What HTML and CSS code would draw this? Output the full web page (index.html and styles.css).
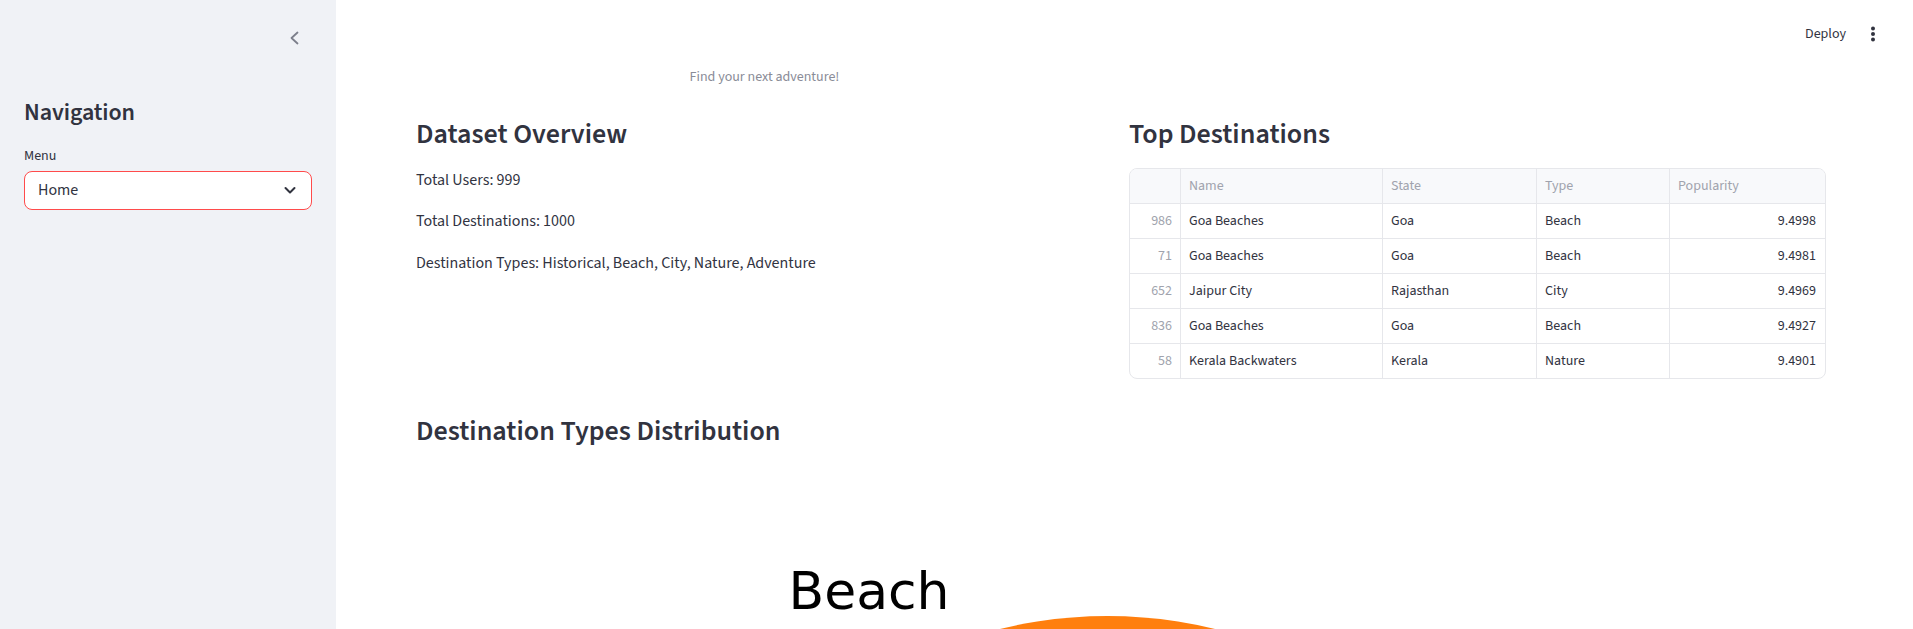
FILE: index.html
```html
<!DOCTYPE html>
<html lang="en">
<head>
<meta charset="utf-8">
<title>Travel Recommender</title>
<link rel="stylesheet" href="styles.css">
</head>
<body>
<div class="app">
  <aside class="sidebar">
    <div class="sb-top">
      <button class="collapse" aria-label="Collapse sidebar">
        <svg width="24" height="24" viewBox="0 0 24 24"><path d="M15.5 6.5 L9.5 12 L15.5 17.5" fill="none" stroke="#7c7f8b" stroke-width="1.8" stroke-linecap="round" stroke-linejoin="round"/></svg>
      </button>
    </div>
    <h2 class="sb-title">Navigation</h2>
    <div class="sb-label">Menu</div>
    <div class="select">
      <span class="select-value">Home</span>
      <svg class="select-arrow" width="14" height="14" viewBox="0 0 14 14"><path d="M2.5 5 L7 9.5 L11.5 5" fill="none" stroke="#31333f" stroke-width="2" stroke-linecap="round" stroke-linejoin="round"/></svg>
    </div>
  </aside>
  <main class="main">
    <header class="topbar">
      <span class="deploy">Deploy</span>
      <svg class="kebab" width="24" height="24" viewBox="0 0 24 24"><circle cx="12" cy="6.5" r="2" fill="#31333f"/><circle cx="12" cy="12" r="2" fill="#31333f"/><circle cx="12" cy="17.5" r="2" fill="#31333f"/></svg>
    </header>
    <div class="content">
      <div class="cols">
        <p class="tagline">Find your next adventure!</p>
        <div></div>
      </div>
      <div class="cols">
        <section class="col">
          <h3 class="h3">Dataset Overview</h3>
          <p class="para">Total Users: 999</p>
          <p class="para">Total Destinations: 1000</p>
          <p class="para">Destination Types: Historical, Beach, City, Nature, Adventure</p>
        </section>
        <section class="col">
          <h3 class="h3">Top Destinations</h3>
          <div class="grid-wrap">
            <table class="grid">
              <colgroup>
                <col class="c-idx"><col class="c-name"><col class="c-state"><col class="c-type"><col class="c-pop">
              </colgroup>
              <thead>
                <tr><th></th><th>Name</th><th>State</th><th>Type</th><th>Popularity</th></tr>
              </thead>
              <tbody>
                <tr><td class="idx">986</td><td>Goa Beaches</td><td>Goa</td><td>Beach</td><td class="num">9.4998</td></tr>
                <tr><td class="idx">71</td><td>Goa Beaches</td><td>Goa</td><td>Beach</td><td class="num">9.4981</td></tr>
                <tr><td class="idx">652</td><td>Jaipur City</td><td>Rajasthan</td><td>City</td><td class="num">9.4969</td></tr>
                <tr><td class="idx">836</td><td>Goa Beaches</td><td>Goa</td><td>Beach</td><td class="num">9.4927</td></tr>
                <tr><td class="idx">58</td><td>Kerala Backwaters</td><td>Kerala</td><td>Nature</td><td class="num">9.4901</td></tr>
              </tbody>
            </table>
          </div>
        </section>
      </div>
      <h3 class="h3 dist-title">Destination Types Distribution</h3>
      <svg class="chart" width="1410" height="900" viewBox="0 0 1410 900">
        <path d="M691.5 605 L1141.5 605 A450 450 0 0 0 830.6 177 Z" fill="#1f77b4"/>
        <path d="M691.5 605 L830.6 177 A450 450 0 0 0 327.4 340.5 Z" fill="#ff7f0e"/>
        <path d="M691.5 605 L327.4 340.5 A450 450 0 0 0 327.4 869.5 Z" fill="#2ca02c"/>
        <path d="M691.5 605 L327.4 869.5 A450 450 0 0 0 830.6 1033 Z" fill="#d62728"/>
        <path d="M691.5 605 L830.6 1033 A450 450 0 0 0 1141.5 605 Z" fill="#9467bd"/>
        <text x="372.5" y="148" class="pie-label">Beach</text>
      </svg>
    </div>
  </main>
</div>
</body>
</html>
```

FILE: styles.css
```css
html, body {
  margin: 0;
  padding: 0;
  height: 100%;
  overflow: hidden;
}
body {
  font-family: "Source Sans Pro", "Source Sans 3", Lato, "Noto Sans", sans-serif;
  color: #31333f;
  background: #ffffff;
}
.app {
  display: flex;
  height: 100vh;
}
.sidebar {
  width: 336px;
  flex: 0 0 336px;
  box-sizing: border-box;
  background: #f0f2f6;
  padding: 0 24px;
}
.sb-top {
  height: 98.5px;
  box-sizing: border-box;
  display: flex;
  justify-content: flex-end;
  align-items: flex-start;
  padding-top: 25.5px;
  padding-right: 6px;
}
.collapse {
  width: 24px;
  height: 24px;
  padding: 0;
  border: 0;
  background: transparent;
  display: flex;
}
.sb-title {
  margin: 0;
  font-size: 24px;
  line-height: 28.8px;
  font-weight: 600;
  letter-spacing: -0.1px;
}
.sb-label {
  margin-top: 19px;
  font-size: 14px;
  line-height: 21px;
  color: #31333f;
}
.select {
  margin-top: 3.5px;
  height: 39px;
  box-sizing: border-box;
  background: #ffffff;
  border: 1px solid #ff4b4b;
  border-radius: 8px;
  display: flex;
  align-items: center;
  justify-content: space-between;
  padding: 0 14px 0 13px;
}
.select-value {
  font-size: 16px;
}
.main {
  flex: 1;
  min-width: 0;
  height: 100vh;
  overflow: hidden;
  background: #ffffff;
}
.topbar {
  height: 66.5px;
  box-sizing: border-box;
  padding: 2px 28px 0 0;
  display: flex;
  align-items: center;
  justify-content: flex-end;
}
.deploy {
  font-size: 14px;
  margin-right: 15px;
}
.content {
  padding: 0 87px 0 80px;
}
.cols {
  display: grid;
  grid-template-columns: 1fr 1fr;
  column-gap: 16px;
}
.tagline {
  margin: 0;
  text-align: center;
  font-size: 14px;
  line-height: 21px;
  color: #8a8c97;
}
.col {
  min-width: 0;
}
.h3 {
  margin: 0;
  font-size: 28px;
  line-height: 33.6px;
  font-weight: 600;
}
.cols + .cols {
  margin-top: 30.4px;
}
.para {
  margin: 16.2px 0 0;
  font-size: 16px;
  line-height: 25.6px;
}
.para + .para {
  margin-top: 16px;
}
.grid-wrap {
  margin-top: 17px;
  border: 1px solid #e6e7eb;
  border-radius: 8px;
  overflow: hidden;
}
.grid {
  width: 100%;
  table-layout: fixed;
  border-collapse: separate;
  border-spacing: 0;
  font-size: 14px;
}
.c-idx { width: 51px; }
.c-name { width: 202px; }
.c-state { width: 154px; }
.c-type { width: 133px; }
.grid th,
.grid td {
  height: 34px;
  padding: 0 8px;
  border-right: 1px solid #e6e7eb;
  border-bottom: 1px solid #e6e7eb;
  white-space: nowrap;
  overflow: hidden;
  text-align: left;
  font-weight: 400;
}
.grid th:last-child,
.grid td:last-child {
  border-right: 0;
}
.grid tbody tr:last-child td {
  border-bottom: 0;
}
.grid th {
  background: #f8f9fb;
  color: #a0a3ad;
}
.grid td.idx {
  color: #a0a3ad;
  text-align: right;
}
.grid td.num {
  text-align: right;
  padding-right: 9px;
}
.dist-title {
  margin-top: 35.6px;
}
.chart {
  display: block;
  margin-top: 12.3px;
}
.pie-label {
  font-family: "DejaVu Sans", sans-serif;
  font-size: 52px;
  fill: #000000;
}
```
